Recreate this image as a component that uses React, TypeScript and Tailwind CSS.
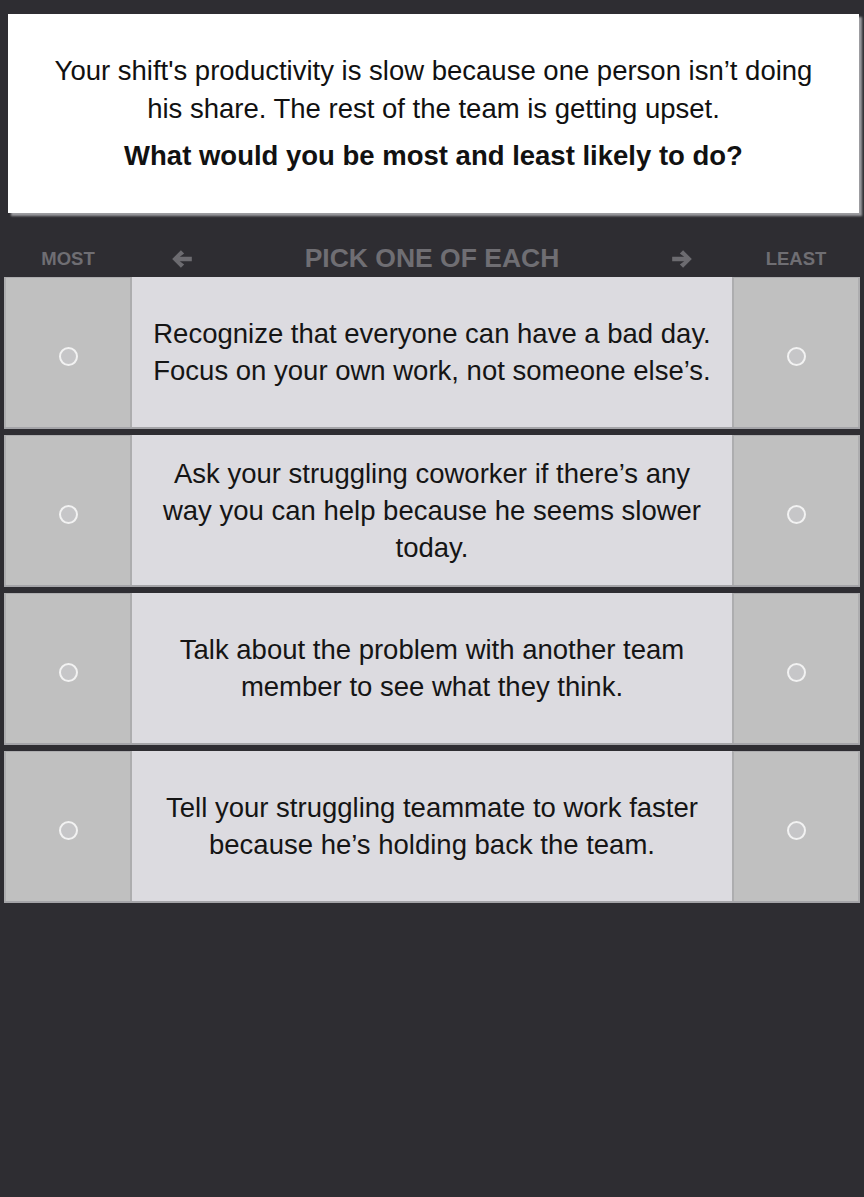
import React from "react";

const options: string[][] = [
  ["Recognize that everyone can have a bad day.", "Focus on your own work, not someone else\u2019s."],
  ["Ask your struggling coworker if there\u2019s any", "way you can help because he seems slower", "today."],
  ["Talk about the problem with another team", "member to see what they think."],
  ["Tell your struggling teammate to work faster", "because he\u2019s holding back the team."],
];

function Arrow({ dir }: { dir: "left" | "right" }) {
  return (
    <svg width="24" height="22" viewBox="0 0 22 20" className={dir === "right" ? "rotate-180" : ""}>
      <path d="M2 10 L10 2 L13 5 L9 8 L20 8 L20 12 L9 12 L13 15 L10 18 Z" fill="#6c6b70" />
    </svg>
  );
}

function Radio() {
  return <span className="block mt-[7px] w-[19px] h-[19px] rounded-full border-2 border-[#f2f2f2] bg-[#c6c6c8]" />;
}

function SideCell() {
  return (
    <div className="w-[128px] shrink-0 bg-[#c0c0c0] border-x-2 border-t border-[#adadaf] flex items-center justify-center">
      <Radio />
    </div>
  );
}

export default function App() {
  return (
    <div
      className="min-h-[1197px] bg-[#2e2d32] pt-[14px]"
      style={{ fontFamily: '"Liberation Sans", Arial, sans-serif' }}
    >
      <div className="ml-[8px] mr-[5px] bg-white pt-[38px] pb-[38px] text-center text-[#111] shadow-[3px_3px_2px_#9c9ca0]">
        <p className="text-[27.5px] leading-[38px] whitespace-nowrap">
          Your shift's productivity is slow because one person isn’t doing
          <br />
          his share. The rest of the team is getting upset.
        </p>
        <p className="mt-[9px] text-[27.5px] leading-[38px] font-bold whitespace-nowrap">
          What would you be most and least likely to do?
        </p>
      </div>

      <div className="mt-[31px] mb-[3px] mx-[4px] h-[30px] flex items-center text-[#6f6e73] font-bold">
        <div className="w-[128px] text-center text-[18.5px]">MOST</div>
        <div className="flex-1 flex items-center justify-between px-[38px]">
          <Arrow dir="left" />
          <span className="text-[26.5px]">PICK ONE OF EACH</span>
          <Arrow dir="right" />
        </div>
        <div className="w-[128px] text-center text-[18.5px]">LEAST</div>
      </div>

      <div className="mx-[4px] flex flex-col gap-[6px]">
        {options.map((lines, i) => (
          <div key={i} className="h-[152px] flex border-b-2 border-[#a4a4a8]">
            <SideCell />
            <div className="flex-1 bg-[#dcdbe0] flex items-center justify-center text-center text-[27.5px] leading-[37px] text-[#151515] whitespace-nowrap">
              <p>
                {lines.map((l, j) => (
                  <React.Fragment key={j}>
                    {j > 0 && <br />}
                    {l}
                  </React.Fragment>
                ))}
              </p>
            </div>
            <SideCell />
          </div>
        ))}
      </div>
    </div>
  );
}
